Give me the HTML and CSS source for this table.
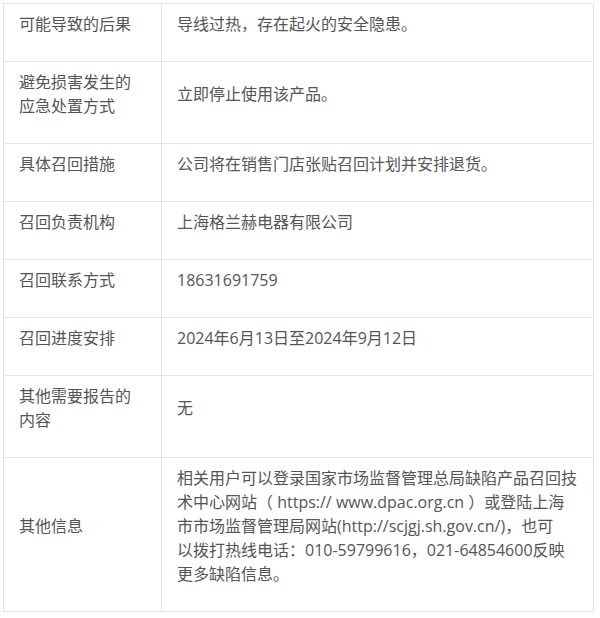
FILE: index.html
```html
<!DOCTYPE html>
<html lang="zh-CN">
<head>
<meta charset="utf-8">
<title>召回信息</title>
<link rel="stylesheet" href="styles.css">
</head>
<body>
<div class="wrap">
<table class="info">
<colgroup><col class="c1"><col class="c2"></colgroup>
<tbody>
<tr><td>可能导致的后果</td><td>导线过热，存在起火的安全隐患。</td></tr>
<tr><td>避免损害发生的<br>应急处置方式</td><td>立即停止使用该产品。</td></tr>
<tr><td>具体召回措施</td><td>公司将在销售门店张贴召回计划并安排退货。</td></tr>
<tr><td>召回负责机构</td><td>上海格兰赫电器有限公司</td></tr>
<tr><td>召回联系方式</td><td>18631691759</td></tr>
<tr><td>召回进度安排</td><td>2024年6月13日至2024年9月12日</td></tr>
<tr><td>其他需要报告的<br>内容</td><td>无</td></tr>
<tr><td>其他信息</td><td>相关用户可以登录国家市场监督管理总局缺陷产品召回技<br>术中心网站（ https:// www.dpac.org.cn ）或登陆上海<br>市市场监督管理局网站(http://scjgj.sh.gov.cn/)，也可<br>以拨打热线电话：010-59799616，021-64854600反映<br>更多缺陷信息。</td></tr>
</tbody>
</table>
</div>
</body>
</html>
```

FILE: styles.css
```css
html, body {
  margin: 0;
  padding: 0;
  background: #fff;
}
.wrap {
  padding: 3px;
}
.info {
  border-collapse: collapse;
  table-layout: fixed;
  width: 590px;
  font-family: "Open Sans", "Noto Sans CJK SC", sans-serif;
  font-size: 16px;
  line-height: 24px;
  color: #555;
}
.c1 { width: 158px; }
.c2 { width: 432px; }
.info td {
  border: 1px solid #e4e4e4;
  padding: 8px 4px 25px 15px;
  vertical-align: middle;
  white-space: nowrap;
}
```
